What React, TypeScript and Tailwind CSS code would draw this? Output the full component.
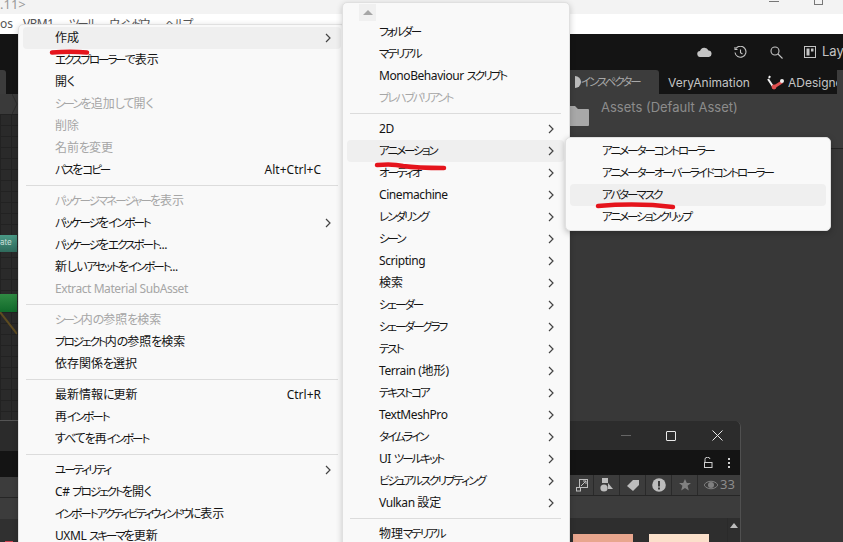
import React from "react";

type Item = { t: string; d?: boolean; s?: string; c?: boolean; h?: boolean } | "sep";

const m1: Item[] = [
  { t: "作成", c: true, h: true },
  { t: "エクスプローラーで表示" },
  { t: "開く" },
  { t: "シーンを追加して開く", d: true },
  { t: "削除", d: true },
  { t: "名前を変更", d: true },
  { t: "パスをコピー", s: "Alt+Ctrl+C" },
  "sep",
  { t: "パッケージマネージャーを表示", d: true },
  { t: "パッケージをインポート", c: true },
  { t: "パッケージをエクスポート..." },
  { t: "新しいアセットをインポート..." },
  { t: "Extract Material SubAsset", d: true },
  "sep",
  { t: "シーン内の参照を検索", d: true },
  { t: "プロジェクト内の参照を検索" },
  { t: "依存関係を選択" },
  "sep",
  { t: "最新情報に更新", s: "Ctrl+R" },
  { t: "再インポート" },
  { t: "すべてを再インポート" },
  "sep",
  { t: "ユーティリティ", c: true },
  { t: "C# プロジェクトを開く" },
  { t: "インポートアクティビティウィンドウに表示" },
  { t: "UXML スキーマを更新" },
];

const m2: Item[] = [
  { t: "フォルダー" },
  { t: "マテリアル" },
  { t: "MonoBehaviour スクリプト" },
  { t: "プレハブバリアント", d: true },
  "sep",
  { t: "2D", c: true },
  { t: "アニメーション", c: true, h: true },
  { t: "オーディオ", c: true },
  { t: "Cinemachine", c: true },
  { t: "レンダリング", c: true },
  { t: "シーン", c: true },
  { t: "Scripting", c: true },
  { t: "検索", c: true },
  { t: "シェーダー", c: true },
  { t: "シェーダーグラフ", c: true },
  { t: "テスト", c: true },
  { t: "Terrain (地形)", c: true },
  { t: "テキストコア", c: true },
  { t: "TextMeshPro", c: true },
  { t: "タイムライン", c: true },
  { t: "UI ツールキット", c: true },
  { t: "ビジュアルスクリプティング", c: true },
  { t: "Vulkan 設定", c: true },
  "sep",
  { t: "物理マテリアル" },
];

const m3: Item[] = [
  { t: "アニメーターコントローラー" },
  { t: "アニメーターオーバーライドコントローラー" },
  { t: "アバターマスク", h: true },
  { t: "アニメーションクリップ" },
];

/* The reference's UI font has much narrower kana than Noto Sans CJK, so runs are tightened by script. */
function Txt({ t }: { t: string }) {
  const runs = t.match(/[\u30A0-\u30FF]+|[\u3040-\u309F]+|[\x20-\x7e]+|[^\u30A0-\u30FF\u3040-\u309F\x20-\x7e]+/g) || [];
  return (
    <>
      {runs.map((r, i) => {
        const c = r.charCodeAt(0);
        let cls = "";
        if (c >= 0x30a0 && c <= 0x30ff) cls = "text-[11.5px] tracking-[-2px]";
        else if (c >= 0x3040 && c <= 0x309f) cls = "tracking-[-1px]";
        else if (c < 0x7f) cls = "tracking-[-0.42px]";
        return (
          <span key={i} className={cls}>
            {r}
          </span>
        );
      })}
    </>
  );
}

function Rows({ items }: { items: Item[] }) {
  return (
    <>
      {items.map((it, i) =>
        it === "sep" ? (
          <div key={i} className="mx-[3px] my-[4px] h-px bg-[#dcdcdc]" />
        ) : (
          <div
            key={i}
            className={`flex h-[22px] items-center rounded-[4px] pl-[32px] ${it.h ? "bg-[#efefef]" : ""} ${it.d ? "text-[#a6a6a6]" : "text-[#141414]"}`}
          >
            <span className="flex-1 whitespace-nowrap">
              <Txt t={it.t} />
            </span>
            {it.s && <span className="mr-[20px]">{it.s}</span>}
            {it.c && (
              <svg width="6" height="10" viewBox="0 0 6 10" className="mr-[10px]">
                <path d="M1 1l4 4-4 4" fill="none" stroke="#444" strokeWidth="1.2" />
              </svg>
            )}
          </div>
        )
      )}
    </>
  );
}

function Inspector() {
  return (
    <div className="flex min-w-0 flex-1 flex-col bg-[#383838]">
      <div className="flex h-[24px] items-stretch bg-[#141414] pt-px text-[12px] text-[#c4c4c4]">
        <div className="-mt-px flex w-[89px] items-center rounded-tr-[3px] bg-[#3c3c3c] pl-[5px]">
          <svg width="6" height="14" viewBox="0 0 6 14"><circle cx="0" cy="7" r="6" fill="#bbb" /></svg>
          <span className="whitespace-nowrap pt-px tracking-[0.5px] text-[#a8a8a8]"><Txt t="インスペクター" /></span>
        </div>
        <div className="ml-[9px] flex items-center whitespace-nowrap">VeryAnimation</div>
        <div className="ml-[17px] flex items-center gap-[3px] whitespace-nowrap">
          <svg width="18" height="16" viewBox="0 0 18 16">
            <path d="M2 3l1-2M1 4l6 9" fill="none" stroke="#f0f0f0" strokeWidth="2" />
            <path d="M7 12l8-5" fill="none" stroke="#e05050" strokeWidth="3" />
            <circle cx="15" cy="6" r="2" fill="#f0f0f0" />
            <circle cx="7" cy="12" r="2.4" fill="#e05050" />
          </svg>
          <span className="w-[49px] overflow-hidden">ADesigner</span>
        </div>
        <div className="-mt-px flex-1 bg-[#3c3c3c]" />
      </div>
      <div className="flex h-[55px] border-b border-[#232323] bg-[#3c3c3c] text-[13px] text-[#8c8c8c]">
        <svg width="20" height="24" viewBox="0 0 20 24" className="mt-[9px] shrink-0">
          <path d="M-8 3h13l3 3h10a1 1 0 011 1v15a1 1 0 01-1 1H-8z" fill="#a8a8a8" />
        </svg>
        <span className="ml-[11px] mt-[4px] whitespace-nowrap">Assets (Default Asset)</span>
      </div>
      <div className="flex-1" />
    </div>
  );
}

function FloatingWindow() {
  return (
    <div className="absolute left-[560px] top-[421px] flex h-[121px] w-[181px] flex-col overflow-hidden rounded-tr-[6px] border-r border-[#505050] bg-[#2e2e2e]">
      <div className="flex h-[30px] items-center justify-end bg-[#2c2c2c] pr-[17px]">
        <div className="mr-[35px] h-px w-[10px] bg-[#666]" />
        <div className="mr-[36px] h-[10px] w-[10px] rounded-[1px] border border-[#e8e8e8]" />
        <svg width="11" height="11" viewBox="0 0 11 11">
          <path d="M0.5 0.5l10 10M10.5 0.5l-10 10" stroke="#e8e8e8" strokeWidth="1" />
        </svg>
      </div>
      <div className="flex h-[25px] items-center justify-end gap-[15px] bg-[#141414] pr-[10px]">
        <svg width="9" height="11" viewBox="0 0 9 11" fill="none" stroke="#d0d0d0">
          <path d="M1 5V2.500A2.500 2 0 016 2" />
          <rect x="0.500" y="5.500" width="7.500" height="5" />
        </svg>
        <div className="flex flex-col gap-[2px]">
          <div className="h-[2px] w-[2px] bg-[#d0d0d0]" />
          <div className="h-[2px] w-[2px] bg-[#d0d0d0]" />
          <div className="h-[2px] w-[2px] bg-[#d0d0d0]" />
        </div>
      </div>
      <div className="flex h-[22px] items-stretch justify-end border-b border-[#262626] bg-[#3c3c3c] text-[13px] text-[#8c8c8c]">
        <div className="flex w-[24px] items-center justify-center border-r border-[#2a2a2a]">
          <svg width="14" height="14" viewBox="0 0 14 14" fill="none" stroke="#bdbdbd">
            <rect x="4.500" y="1.500" width="8" height="8" />
            <rect x="1.500" y="9.500" width="4" height="3.500" />
            <path d="M6 8l5-5M8 3h3v3" />
          </svg>
        </div>
        <div className="flex w-[26px] items-center justify-center border-r border-[#2a2a2a]">
          <svg width="14" height="14" viewBox="0 0 14 14" fill="#bdbdbd">
            <rect x="2" y="0" width="6" height="5" />
            <circle cx="4" cy="10" r="3.600" />
            <path d="M8 5l5 6H8z" />
          </svg>
        </div>
        <div className="flex w-[26px] items-center justify-center border-r border-[#2a2a2a]">
          <svg width="14" height="14" viewBox="0 0 14 14" fill="#bdbdbd">
            <path d="M1 8l6-6h6v5l-6 6z" />
          </svg>
        </div>
        <div className="flex w-[26px] items-center justify-center border-r border-[#2a2a2a]">
          <svg width="14" height="14" viewBox="0 0 14 14">
            <circle cx="7" cy="7" r="6.800" fill="#bdbdbd" />
            <rect x="6" y="3" width="2" height="5.500" fill="#3c3c3c" />
            <rect x="6" y="9.500" width="2" height="2" fill="#3c3c3c" />
          </svg>
        </div>
        <div className="flex w-[26px] items-center justify-center border-r border-[#2a2a2a]">
          <svg width="12" height="12" viewBox="0 0 12 12" fill="#808080">
            <path d="M6 0l1.800 4H12L8.600 6.800 9.800 11.500 6 9 2.200 11.500 3.400 6.800 0 4h4.200z" />
          </svg>
        </div>
        <div className="flex w-[42px] items-center gap-[2px] pl-[6px]">
          <svg width="14" height="10" viewBox="0 0 14 10">
            <path d="M0 5c3-5 11-5 14 0-3 5-11 5-14 0z" fill="none" stroke="#808080" />
            <circle cx="7" cy="5" r="3" fill="#808080" />
          </svg>
          <span>33</span>
        </div>
      </div>
      <div className="h-[22px] bg-[#3c3c3c]" />
      <div className="flex flex-1 justify-between">
        <div className="ml-[13px] mt-[16px] flex gap-[16px]">
          <div className="h-[8px] w-[60px] bg-[#e8a68e]" />
          <div className="h-[8px] w-[60px] bg-[#fbe0cb]" />
        </div>
        <div className="flex w-[13px] justify-center border-l border-[#2a2a2a] pt-[5px]">
          <div className="h-0 w-0 border-x-[4px] border-b-[5px] border-x-transparent border-b-[#bdbdbd]" />
        </div>
      </div>
    </div>
  );
}

function GraphPanel() {
  return (
    <div className="flex h-full flex-col">
      <div className="flex h-[24px] bg-[#141414]">
        <div className="w-[6px] rounded-tr-[3px] bg-[#3c3c3c]" />
      </div>
      <div className="flex h-[20px] justify-start bg-[#3a3a3a] pl-[12px]">
        <svg width="6" height="20" viewBox="0 0 6 20">
          <path d="M0 0l5 10-5 10" fill="none" stroke="#2c2c2c" />
        </svg>
      </div>
      <div className="relative h-[306px] bg-[#2a2a2a] bg-[linear-gradient(#222222_1px,transparent_1px),linear-gradient(90deg,#222222_1px,transparent_1px)] bg-[size:11px_11px]">
        <div className="absolute left-0 top-[121px] h-[17px] w-[17px] bg-gradient-to-b from-[#4a9a86] to-[#2f6a5c] text-[8px] leading-[15px] text-[#c9dcd6]">
          ate
        </div>
        <div className="absolute left-0 top-[180px] h-[18px] w-[17px] bg-gradient-to-b from-[#2f8a43] to-[#0f6a2b]" />
        <svg className="absolute left-0 top-[198px]" width="17" height="24" viewBox="0 0 17 24">
          <path d="M0 0l17 22" stroke="#5e4c20" strokeWidth="2" fill="none" />
        </svg>
      </div>
      <div className="h-[31px] border-t border-[#555] bg-[#2b2b2b]" />
      <div className="h-[26px] bg-[#141414]" />
      <div className="h-[21px] border-b border-[#262626] bg-[#3c3c3c]" />
      <div className="h-[21px] bg-[#3c3c3c]" />
      <div className="relative flex-1 bg-[#303030]">
        <div className="absolute bottom-0 left-[5px] h-px w-[8px] bg-[#d04050]" />
      </div>
    </div>
  );
}

export default function App() {
  return (
    <div className="relative h-[542px] w-[843px] overflow-hidden bg-[#383838] font-['Noto_Sans','Noto_Sans_CJK_JP',sans-serif] text-[12px] [font-feature-settings:'palt']">
      <div className="flex h-[14px] items-start justify-between overflow-hidden bg-[#f3f3f3] pr-[20px] text-[13px] leading-[8px] text-[#999]">
        <span>.11&gt;</span>
        <div className="flex gap-[35px]">
          <div className="mt-px h-px w-[10px] bg-[#777]" />
          <div className="h-[5px] w-[9px] border-x border-b border-[#777]" />
        </div>
      </div>
      <div className="flex h-[20px] items-end bg-white pb-[1px] text-[#555]">
        <span className="mr-[11px] w-[12px] whitespace-nowrap">os</span>
        <span className="mr-[15px]"><Txt t="VRM1" /></span>
        <span className="mr-[14px]"><Txt t="ツール" /></span>
        <span className="mr-[16px]"><Txt t="ウィンドウ" /></span>
        <span><Txt t="ヘルプ" /></span>
      </div>
      <div className="flex h-[508px] flex-col bg-[#141414] font-['Inter','Noto_Sans_CJK_JP',sans-serif]">
        <div className="flex h-[36px] items-center justify-end text-[13px] text-[#c4c4c4]">
          <svg width="15" height="10" viewBox="0 0 15 10"><path d="M3.500 10a3 3 0 01-.5-6 4.500 4.500 0 018.500-.5 3.300 3.300 0 01.500 6.500z" fill="#c4c4c4" /></svg>
          <svg width="13" height="13" viewBox="0 0 13 13" fill="none" stroke="#c4c4c4" strokeWidth="1.100" className="ml-[22px]">
            <path d="M2 2.500A5.500 5.500 0 111 6.500M1 1v2.500h2.500M6.500 3.500v3.200l2 1.300" />
          </svg>
          <svg width="13" height="13" viewBox="0 0 13 13" fill="none" stroke="#c4c4c4" strokeWidth="1.100" className="ml-[23px]">
            <circle cx="5" cy="5" r="4" />
            <path d="M8 8l4.500 4.500" />
          </svg>
          <div className="ml-[21px] flex items-center gap-[6px]">
            <svg width="12" height="12" viewBox="0 0 12 12" fill="none" stroke="#c4c4c4">
              <rect x="0.500" y="0.500" width="11" height="11" />
              <path d="M2.500 2.500h3v7h-3zM7 2.500h2.500v3H7z" fill="#c4c4c4" stroke="none" />
            </svg>
            <span className="w-[21px] overflow-hidden">Layout</span>
          </div>
        </div>
        <div className="flex flex-1">
          <div className="w-[570px] shrink-0">
            <GraphPanel />
          </div>
          <Inspector />
        </div>
      </div>
      <FloatingWindow />

      {/* context menus */}
      <div className="absolute left-[18px] top-[24px] h-[530px] w-[328px] rounded-[5px] border border-[#e0e0e0] bg-[#f9f9f9] px-[4px] pt-[2px] shadow-[0_2px_6px_rgba(0,0,0,0.2)]">
        <Rows items={m1} />
      </div>
      <div className="absolute left-[342px] top-[2px] h-[552px] w-[228px] rounded-[5px] border border-[#e0e0e0] bg-[#f9f9f9] pl-[4px] pr-[5px] pt-[1px] shadow-[0_2px_6px_rgba(0,0,0,0.2)]">
        <div className="h-[17px] pl-[12px]">
          <div className="flex h-[17px] w-[17px] items-center justify-center bg-[#f0f0f0]">
            <div className="h-0 w-0 border-x-[5px] border-b-[5px] border-x-transparent border-b-[#a6a6a6]" />
          </div>
        </div>
        <Rows items={m2} />
      </div>
      <div className="absolute left-[565px] top-[137px] w-[266px] rounded-[5px] border border-[#e0e0e0] bg-[#f9f9f9] px-[4px] pb-[2px] pt-[2px] shadow-[0_2px_6px_rgba(0,0,0,0.25)]">
        <Rows items={m3} />
      </div>

      {/* red marker annotations */}
      <svg className="pointer-events-none absolute left-0 top-0" width="843" height="542" fill="none" stroke="#e5141c" strokeWidth="4.500" strokeLinecap="round">
        <path d="M52 52.500c12-1 24-1 35 0" />
        <path d="M377 165c10-1 18-1 26 1 14 2 28 2 41 2" />
        <path d="M598 206c25-2 50-2 75 1" />
      </svg>
    </div>
  );
}
